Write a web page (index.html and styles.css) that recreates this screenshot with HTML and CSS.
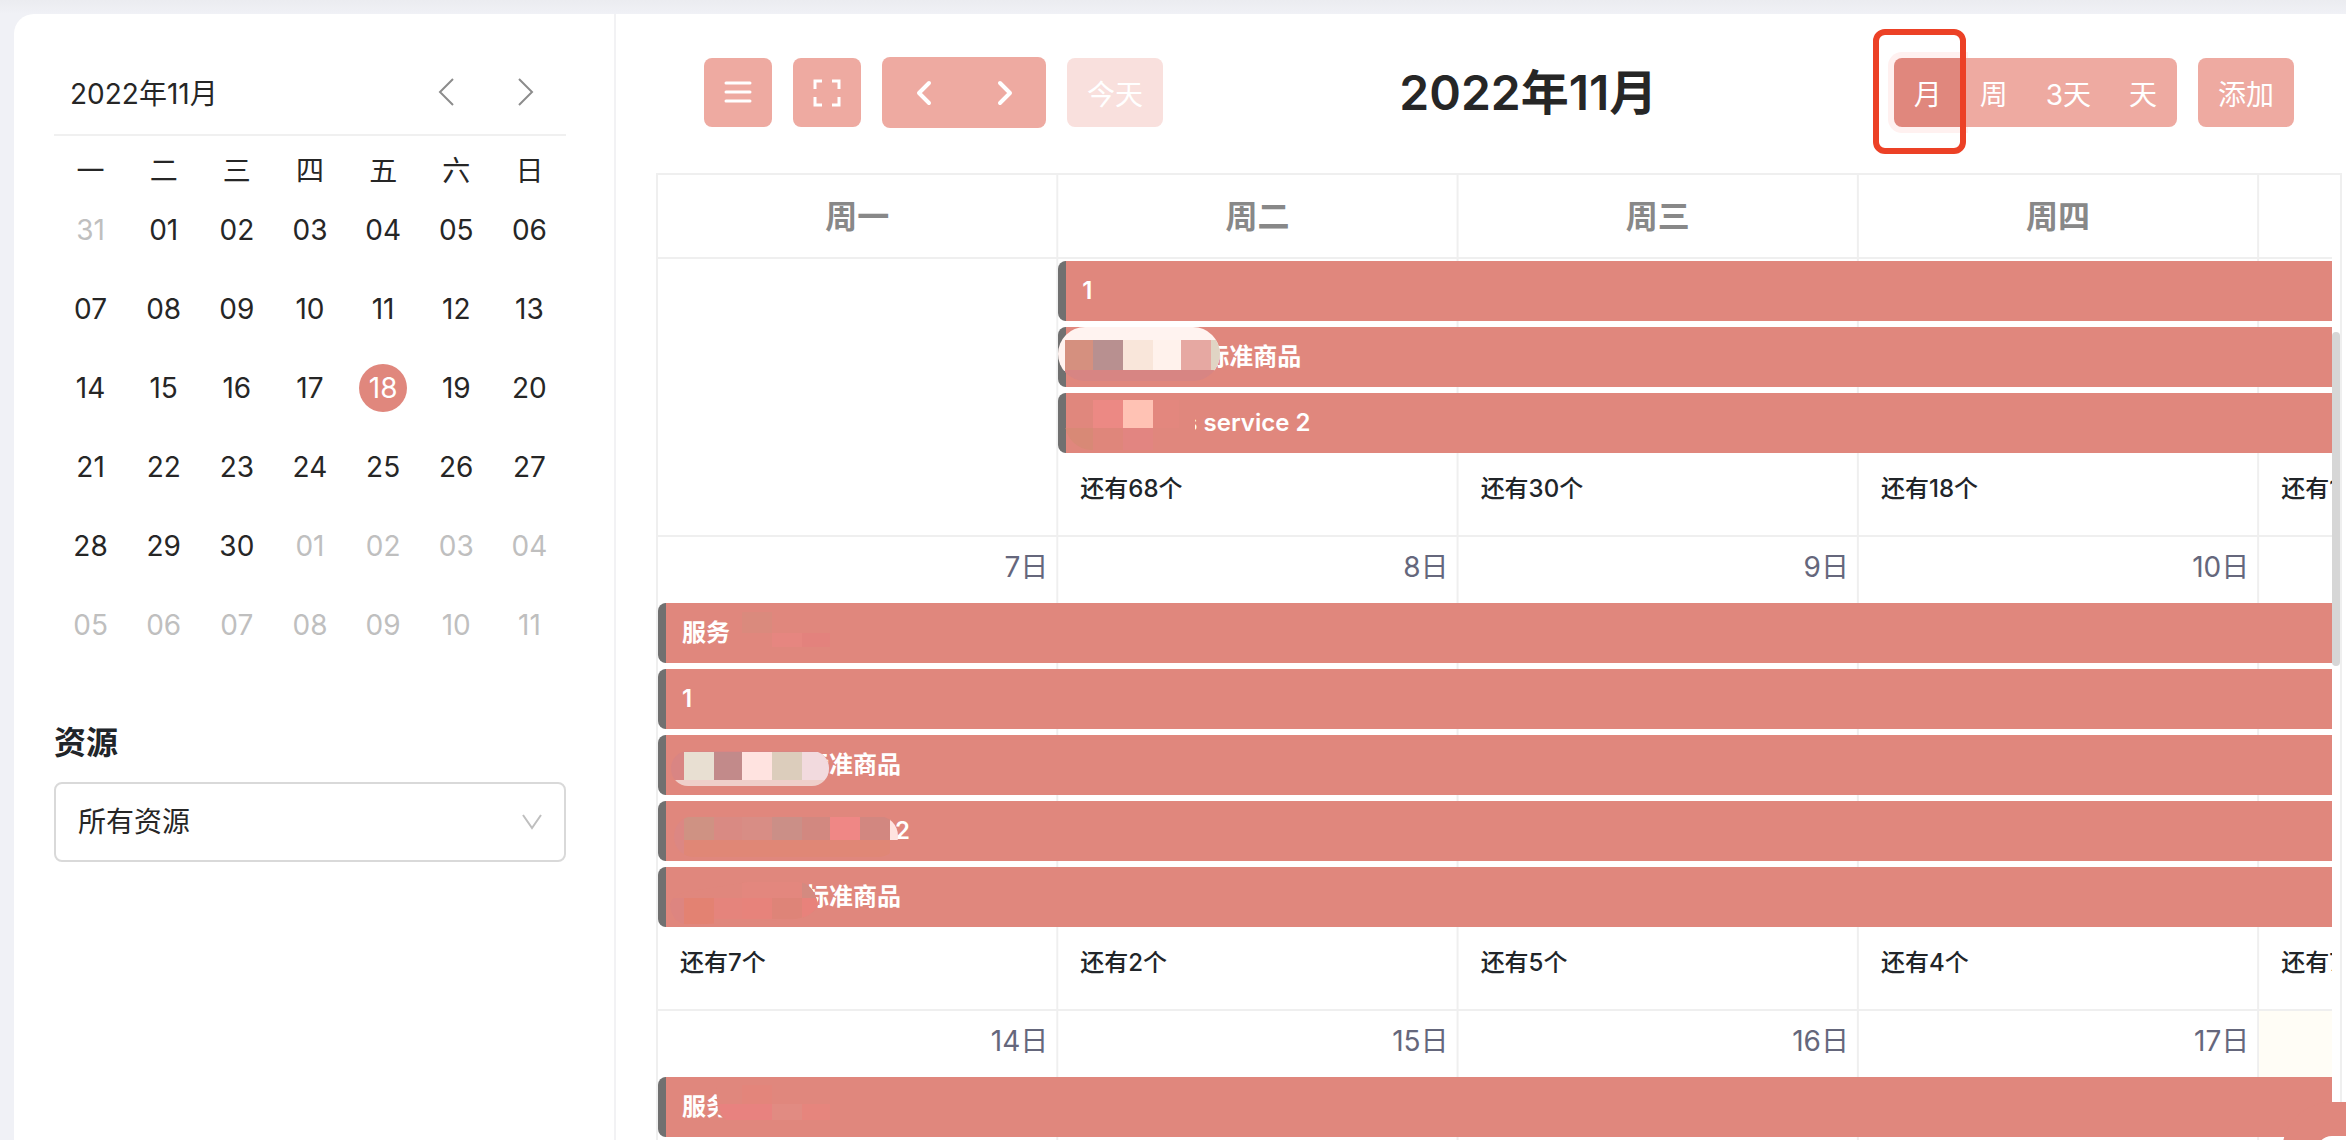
FILE: index.html
```html
<!DOCTYPE html>
<html lang="zh-CN">
<head>
    <meta charset="utf-8">
    <title>2022年11月</title>
    <link rel="stylesheet" href="styles.css">
</head>
<body>
    <div class="panel">
        <aside class="sidebar">
            <div class="mini-header">
                <span class="mini-title">2022年11月</span>
                <button class="mini-nav" type="button" aria-label="上个月">
                    <svg width="18" height="30" viewBox="0 0 18 30"><path d="M16 2L3 15L16 28"/></svg>
                </button>
                <button class="mini-nav" type="button" aria-label="下个月">
                    <svg width="18" height="30" viewBox="0 0 18 30"><path d="M2 2L15 15L2 28"/></svg>
                </button>
            </div>

            <table class="mini-calendar">
                <thead>
                    <tr><th>一</th><th>二</th><th>三</th><th>四</th><th>五</th><th>六</th><th>日</th></tr>
                </thead>
                <tbody id="mini-days"></tbody>
            </table>

            <label class="resource-label" for="resource">资源</label>
            <div class="resource-select">
                <select id="resource">
                    <option>所有资源</option>
                </select>
                <svg width="20" height="16" viewBox="0 0 20 16"><path d="M1 1L10 14L19 1"/></svg>
            </div>
        </aside>

        <main class="main">
            <div class="toolbar">
                <div class="toolbar-left">
                    <button class="btn btn-icon" type="button" aria-label="菜单">
                        <svg width="28" height="28" viewBox="0 0 28 28"><path d="M2 4H26M2 13H26M2 22H26"/></svg>
                    </button>
                    <button class="btn btn-icon" type="button" aria-label="全屏">
                        <svg width="28" height="28" viewBox="0 0 28 28"><path class="square" d="M2 10V2H9M19 2H26V10M26 18V26H19M9 26H2V18"/></svg>
                    </button>
                    <div class="btn-group">
                        <button class="btn btn-nav" type="button" aria-label="上一页">
                            <svg width="16" height="26" viewBox="0 0 16 26"><path class="bold" d="M13 3L3 13L13 23"/></svg>
                        </button>
                        <button class="btn btn-nav" type="button" aria-label="下一页">
                            <svg width="16" height="26" viewBox="0 0 16 26"><path class="bold" d="M3 3L13 13L3 23"/></svg>
                        </button>
                    </div>
                    <button class="btn" type="button" disabled>今天</button>
                </div>
                <h2 class="toolbar-title">2022年11月</h2>
                <div class="toolbar-right">
                    <div class="btn-group">
                        <button class="btn active" type="button">月</button>
                        <button class="btn" type="button">周</button>
                        <button class="btn" type="button">3天</button>
                        <button class="btn" type="button">天</button>
                        <span class="marker"></span>
                    </div>
                    <button class="btn" type="button">添加</button>
                </div>
            </div>

            <div class="calendar">
                <table class="month">
                    <thead>
                        <tr><th>周一</th><th>周二</th><th>周三</th><th>周四</th><th>周五</th><th>周六</th><th>周日</th></tr>
                    </thead>

                    <tbody>
                        <tr class="spacer"><td colspan="7"></td></tr>
                        <tr class="event-row">
                            <td></td>
                            <td colspan="6"><div class="event">1</div></td>
                        </tr>
                        <tr class="event-row">
                            <td></td>
                            <td colspan="6">
                                <div class="event masked">标准商品
                                    <svg class="mosaic" width="240" height="60" viewBox="0 0 240 60">
                                        <clipPath id="m1"><rect x="0" y="0" width="162" height="54" rx="27"/></clipPath>
                                        <g clip-path="url(#m1)">
                                            <rect width="162" height="44" fill="#fff3f0"/>
                                            <rect x="7" y="13" width="28" height="30" fill="#d5907f"/>
                                            <rect x="35" y="13" width="30" height="30" fill="#b89090"/>
                                            <rect x="65" y="13" width="30" height="30" fill="#f9e6da"/>
                                            <rect x="95" y="13" width="28" height="30" fill="#fff2ec"/>
                                            <rect x="123" y="13" width="30" height="30" fill="#e6a8a2"/>
                                            <rect x="153" y="13" width="9" height="30" fill="#e0d4c4"/>
                                            <rect x="7" y="43" width="155" height="11" fill="#d78583"/>
                                        </g>
                                    </svg>
                                </div>
                            </td>
                        </tr>
                        <tr class="event-row">
                            <td></td>
                            <td colspan="6">
                                <div class="event masked-name">s service 2
                                    <svg class="mosaic" width="240" height="60" viewBox="0 0 240 60">
                                        <clipPath id="m2"><rect x="7" y="3" width="131" height="54" rx="27"/></clipPath>
                                        <rect x="8" width="129" height="60" fill="#e0877d"/>
                                        <g clip-path="url(#m2)">
                                            <rect x="35" y="7" width="30" height="28" fill="#ec8984"/>
                                            <rect x="65" y="7" width="30" height="28" fill="#ffc2b4"/>
                                            <rect x="95" y="7" width="26" height="28" fill="#e3877e"/>
                                            <rect x="7" y="35" width="28" height="22" fill="#d88976"/>
                                            <rect x="35" y="35" width="30" height="22" fill="#df867b"/>
                                            <rect x="65" y="35" width="30" height="22" fill="#e28581"/>
                                        </g>
                                    </svg>
                                </div>
                            </td>
                        </tr>
                        <tr class="more-row">
                            <td></td>
                            <td><a href="#">还有68个</a></td>
                            <td><a href="#">还有30个</a></td>
                            <td><a href="#">还有18个</a></td>
                            <td><a href="#">还有16个</a></td>
                            <td></td>
                            <td></td>
                        </tr>
                    </tbody>

                    <tbody>
                        <tr class="date-row">
                            <td>7日</td><td>8日</td><td>9日</td><td>10日</td><td>11日</td><td>12日</td><td>13日</td>
                        </tr>
                        <tr class="event-row">
                            <td colspan="7">
                                <div class="event">服务
                                    <svg class="mosaic" width="240" height="60" viewBox="0 0 240 60">
                                        <rect x="84" y="9" width="30" height="21" fill="#da8a7d"/>
                                        <rect x="114" y="30" width="30" height="14" fill="#e68680"/>
                                        <rect x="144" y="30" width="28" height="14" fill="#e3827d"/>
                                    </svg>
                                </div>
                            </td>
                        </tr>
                        <tr class="event-row">
                            <td colspan="7"><div class="event">1</div></td>
                        </tr>
                        <tr class="event-row">
                            <td colspan="7">
                                <div class="event masked">标准商品
                                    <svg class="mosaic" width="240" height="60" viewBox="0 0 240 60">
                                        <clipPath id="m3"><rect x="13" y="16" width="158" height="35" rx="17"/></clipPath>
                                        <g clip-path="url(#m3)">
                                            <rect x="13" y="15" width="158" height="30" fill="#d98583"/>
                                            <rect x="26" y="17" width="30" height="28" fill="#e8dfd2"/>
                                            <rect x="56" y="17" width="28" height="28" fill="#c28a8a"/>
                                            <rect x="84" y="17" width="30" height="28" fill="#ffe3e0"/>
                                            <rect x="114" y="17" width="30" height="28" fill="#dccdbc"/>
                                            <rect x="144" y="17" width="27" height="28" fill="#f2dade"/>
                                            <rect x="13" y="45" width="158" height="6" fill="#efcfca"/>
                                        </g>
                                    </svg>
                                </div>
                            </td>
                        </tr>
                        <tr class="event-row">
                            <td colspan="7">
                                <div class="event masked-name">s service 2
                                    <svg class="mosaic" width="240" height="60" viewBox="0 0 240 60">
                                        <clipPath id="m4"><rect x="16" y="15" width="224" height="41" rx="20"/></clipPath>
                                        <rect x="8" width="226" height="60" fill="#e0877d"/>
                                        <g clip-path="url(#m4)">
                                            <rect x="16" y="15" width="10" height="40" fill="#dc8783"/>
                                            <rect x="26" y="16" width="30" height="23" fill="#cf9283"/>
                                            <rect x="56" y="16" width="28" height="23" fill="#d98a83"/>
                                            <rect x="84" y="16" width="30" height="23" fill="#d88d85"/>
                                            <rect x="114" y="16" width="30" height="23" fill="#cb8f87"/>
                                            <rect x="144" y="16" width="28" height="23" fill="#d28880"/>
                                            <rect x="172" y="16" width="30" height="23" fill="#ef8785"/>
                                            <rect x="202" y="16" width="30" height="23" fill="#d28780"/>
                                            <rect x="232" y="16" width="8" height="23" fill="#ffe3e0"/>
                                            <rect x="26" y="39" width="206" height="17" fill="#e08776"/>
                                        </g>
                                    </svg>
                                </div>
                            </td>
                        </tr>
                        <tr class="event-row">
                            <td colspan="7">
                                <div class="event masked">标准商品
                                    <svg class="mosaic" width="240" height="60" viewBox="0 0 240 60">
                                        <clipPath id="m5"><path d="M12 38Q14 26 34 24L90 15H140Q156 16 160 38Q154 50 138 52L30 58Q14 56 12 38Z"/></clipPath>
                                        <g clip-path="url(#m5)">
                                            <rect x="12" y="15" width="148" height="45" fill="#e0877d"/>
                                            <rect x="84" y="15" width="60" height="16" fill="#e3877e"/>
                                            <rect x="144" y="15" width="16" height="16" fill="#d48a80"/>
                                            <rect x="12" y="31" width="14" height="26" fill="#dd8580"/>
                                            <rect x="26" y="31" width="30" height="26" fill="#e38272"/>
                                            <rect x="56" y="31" width="28" height="21" fill="#e5847c"/>
                                            <rect x="84" y="31" width="30" height="21" fill="#e7837b"/>
                                            <rect x="114" y="31" width="30" height="21" fill="#de8478"/>
                                            <rect x="144" y="31" width="16" height="21" fill="#e8827b"/>
                                        </g>
                                    </svg>
                                </div>
                            </td>
                        </tr>
                        <tr class="more-row">
                            <td><a href="#">还有7个</a></td>
                            <td><a href="#">还有2个</a></td>
                            <td><a href="#">还有5个</a></td>
                            <td><a href="#">还有4个</a></td>
                            <td><a href="#">还有7个</a></td>
                            <td></td>
                            <td></td>
                        </tr>
                    </tbody>

                    <tbody>
                        <tr class="date-row">
                            <td>14日</td><td>15日</td><td>16日</td><td>17日</td><td class="today">18日</td><td>19日</td><td>20日</td>
                        </tr>
                        <tr class="event-row">
                            <td colspan="7">
                                <div class="event">服务
                                    <svg class="mosaic" width="240" height="60" viewBox="0 0 240 60">
                                        <path d="M58 10H172V44H68L60 36Z" fill="#e0877d"/>
                                        <rect x="84" y="8" width="30" height="19" fill="#e3857b"/>
                                        <path d="M60 27H114V43H68Q62 36 60 27Z" fill="#e8827f"/>
                                        <rect x="114" y="27" width="30" height="16" fill="#e18b82"/>
                                        <rect x="144" y="27" width="28" height="16" fill="#e6857d"/>
                                    </svg>
                                </div>
                            </td>
                        </tr>
                    </tbody>
                </table>
                <div class="scroll-track"><div class="scroll-thumb"></div></div>
            </div>
        </main>
    </div>

    <div class="float-box"></div>

    <script>
        // Monday 31 October is the first cell of the six week grid
        const start = new Date(2022, 9, 31);
        const tbody = document.getElementById('mini-days');

        for (let week = 0; week < 6; week++) {
            const row = document.createElement('tr');
            for (let day = 0; day < 7; day++) {
                const date = new Date(start);
                date.setDate(start.getDate() + week * 7 + day);

                const cell = document.createElement('td');
                const button = document.createElement('button');
                button.type = 'button';
                button.className = 'day';
                button.textContent = String(date.getDate()).padStart(2, '0');
                if (date.getMonth() !== 10) {
                    button.classList.add('other-month');
                } else if (date.getDate() === 18) {
                    button.classList.add('selected');
                }
                cell.appendChild(button);
                row.appendChild(cell);
            }
            tbody.appendChild(row);
        }
    </script>
</body>
</html>
```

FILE: styles.css
```css
* {
    box-sizing: border-box;
}
body {
    margin: 0;
    height: 100vh;
    overflow: hidden;
    background: linear-gradient(#ebecf0, #f0f1f6 14px);
    color: #262626;
    font-family: Inter, "Noto Sans CJK SC", sans-serif;
    font-size: 28px;
}
button,
select {
    font: inherit;
    color: inherit;
}
button {
    padding: 0;
    border: none;
    background: none;
    cursor: pointer;
}
svg {
    display: block;
    fill: none;
}
.panel {
    display: flex;
    height: calc(100vh - 14px);
    margin: 14px 0 0 14px;
    background-color: #fff;
    border-top-left-radius: 20px;
    overflow: hidden;
}

/* sidebar */
.sidebar {
    flex: none;
    width: 602px;
    padding: 0 48px 0 40px;
    border-right: 2px solid #f2f2f4;
}
.mini-header {
    display: flex;
    align-items: center;
    height: 122px;
    padding: 36px 24px 0 16px;
    border-bottom: 2px solid #f0f0f0;
}
.mini-title {
    flex: 1;
}
.mini-nav {
    width: 32px;
    margin-left: 48px;
}
.mini-nav svg {
    margin: 0 auto;
    stroke: #8c8c8c;
    stroke-width: 2;
}
.mini-calendar {
    width: 100%;
    margin-top: 16px;
    border-collapse: collapse;
    table-layout: fixed;
    text-align: center;
}
.mini-calendar th {
    height: 38px;
    padding: 0;
    font-weight: 400;
    line-height: 38px;
}
.mini-calendar td {
    height: 79px;
    padding: 0;
}
.day {
    width: 48px;
    height: 48px;
    border-radius: 50%;
    line-height: 48px;
    vertical-align: middle;
}
.day.other-month {
    color: #bfbfbf;
}
.day.selected {
    background-color: #e0877d;
    color: #fff;
}
.resource-label {
    display: block;
    margin: 59px 0 19px;
    color: #212529;
    font-size: 32px;
    font-weight: 600;
    line-height: 40px;
}
.resource-select {
    position: relative;
}
.resource-select select {
    display: block;
    width: 100%;
    height: 80px;
    padding: 0 22px;
    border: 2px solid #d9d9d9;
    border-radius: 8px;
    background-color: #fff;
    appearance: none;
}
.resource-select svg {
    position: absolute;
    right: 24px;
    top: 32px;
    stroke: #bfbfbf;
    stroke-width: 2;
    pointer-events: none;
}

/* toolbar */
.main {
    flex: 1;
    min-width: 0;
}
.toolbar {
    display: flex;
    align-items: center;
    justify-content: space-between;
    height: 159px;
    padding: 0 52px 2px 88px;
}
.toolbar-left,
.toolbar-right {
    display: flex;
    align-items: center;
    gap: 21px;
}
.toolbar-title {
    margin: 0;
    padding-bottom: 8px;
    font-size: 48px;
    font-weight: 600;
}
.btn {
    height: 69px;
    padding: 0 20px;
    border-radius: 8px;
    background-color: #eeaaa1;
    color: #fff;
}
.btn svg {
    stroke: #fff;
    stroke-width: 3;
    stroke-linecap: round;
}
.btn .square {
    stroke-linecap: butt;
}
.btn .bold {
    stroke-width: 4;
    stroke-linejoin: round;
}
.btn:disabled {
    background-color: #f9e0dd;
}
.btn-group {
    position: relative;
    display: flex;
}
.btn-group .btn {
    border-radius: 0;
}
.btn-group .btn:first-child {
    border-radius: 8px 0 0 8px;
}
.btn-group .btn:last-of-type {
    border-radius: 0 8px 8px 0;
}
.btn-group .btn + .btn {
    position: relative;
    margin-left: -2px;
}
.btn-group .btn-nav {
    display: flex;
    align-items: center;
    justify-content: center;
    width: 83px;
    height: 71px;
}
.btn-group .btn.active {
    background-color: #e0877d;
    box-shadow: 0 0 0 6px #fff1f0;
}
.marker {
    position: absolute;
    left: -21px;
    top: -29px;
    width: 93px;
    height: 125px;
    border: 6px solid #ec4126;
    border-radius: 12px;
    pointer-events: none;
}

/* month view */
.calendar {
    position: relative;
    margin: 0 4px 0 40px;
    border: 2px solid #efefef;
    border-bottom: none;
    height: calc(100% - 159px);
    overflow: hidden;
}
.month {
    width: 166.6%;
    border-spacing: 0;
    table-layout: fixed;
    background-image: linear-gradient(to left, #efefef 2px, transparent 2px);
    background-size: calc(100% / 7) 100%;
}
.month th {
    height: 84px;
    padding: 0 2px 4px 0;
    border-bottom: 2px solid #efefef;
    color: #888;
    font-size: 32px;
    font-weight: 700;
}
.month td {
    padding: 0;
}
.month .spacer td {
    height: 2px;
}
.month .date-row td {
    height: 66px;
    padding: 0 10px 6px 0;
    color: #65677c;
    line-height: 60px;
    text-align: right;
}
.month .date-row .today {
    background-color: #fffdf6;
    background-clip: padding-box;
    border-right: 2px solid #efefef;
}
.month .event-row td {
    height: 66px;
    padding-bottom: 6px;
}
.event {
    position: relative;
    height: 60px;
    padding-left: 16px;
    border-left: 8px solid #707070;
    border-radius: 8px 0 0 8px;
    background-color: #e0877d;
    color: #fff;
    font-size: 24px;
    font-weight: 600;
    line-height: 60px;
    white-space: nowrap;
}
.event.masked {
    padding-left: 139px;
}
.event.masked-name {
    padding-left: 118px;
}
.mosaic {
    position: absolute;
    left: -8px;
    top: 0;
}
.month .more-row td {
    height: 78px;
    padding: 0 22px 16px;
    border-bottom: 2px solid #efefef;
    font-size: 24px;
    font-weight: 500;
    line-height: 60px;
}
.more-row a {
    color: #212529;
    text-decoration: none;
}
.scroll-track {
    position: absolute;
    right: 0;
    top: 82px;
    bottom: 0;
    width: 8px;
    background-color: #fff;
}
.scroll-thumb {
    height: 334px;
    margin-top: 75px;
    border-radius: 4px;
    background-color: #d6d6d6;
}

/* corner box, mostly below the fold */
.float-box {
    position: fixed;
    right: -60px;
    bottom: -86px;
    width: 124px;
    height: 124px;
    border: 34px solid #e0877d;
    border-radius: 50px;
    background-color: #fff;
}
```
